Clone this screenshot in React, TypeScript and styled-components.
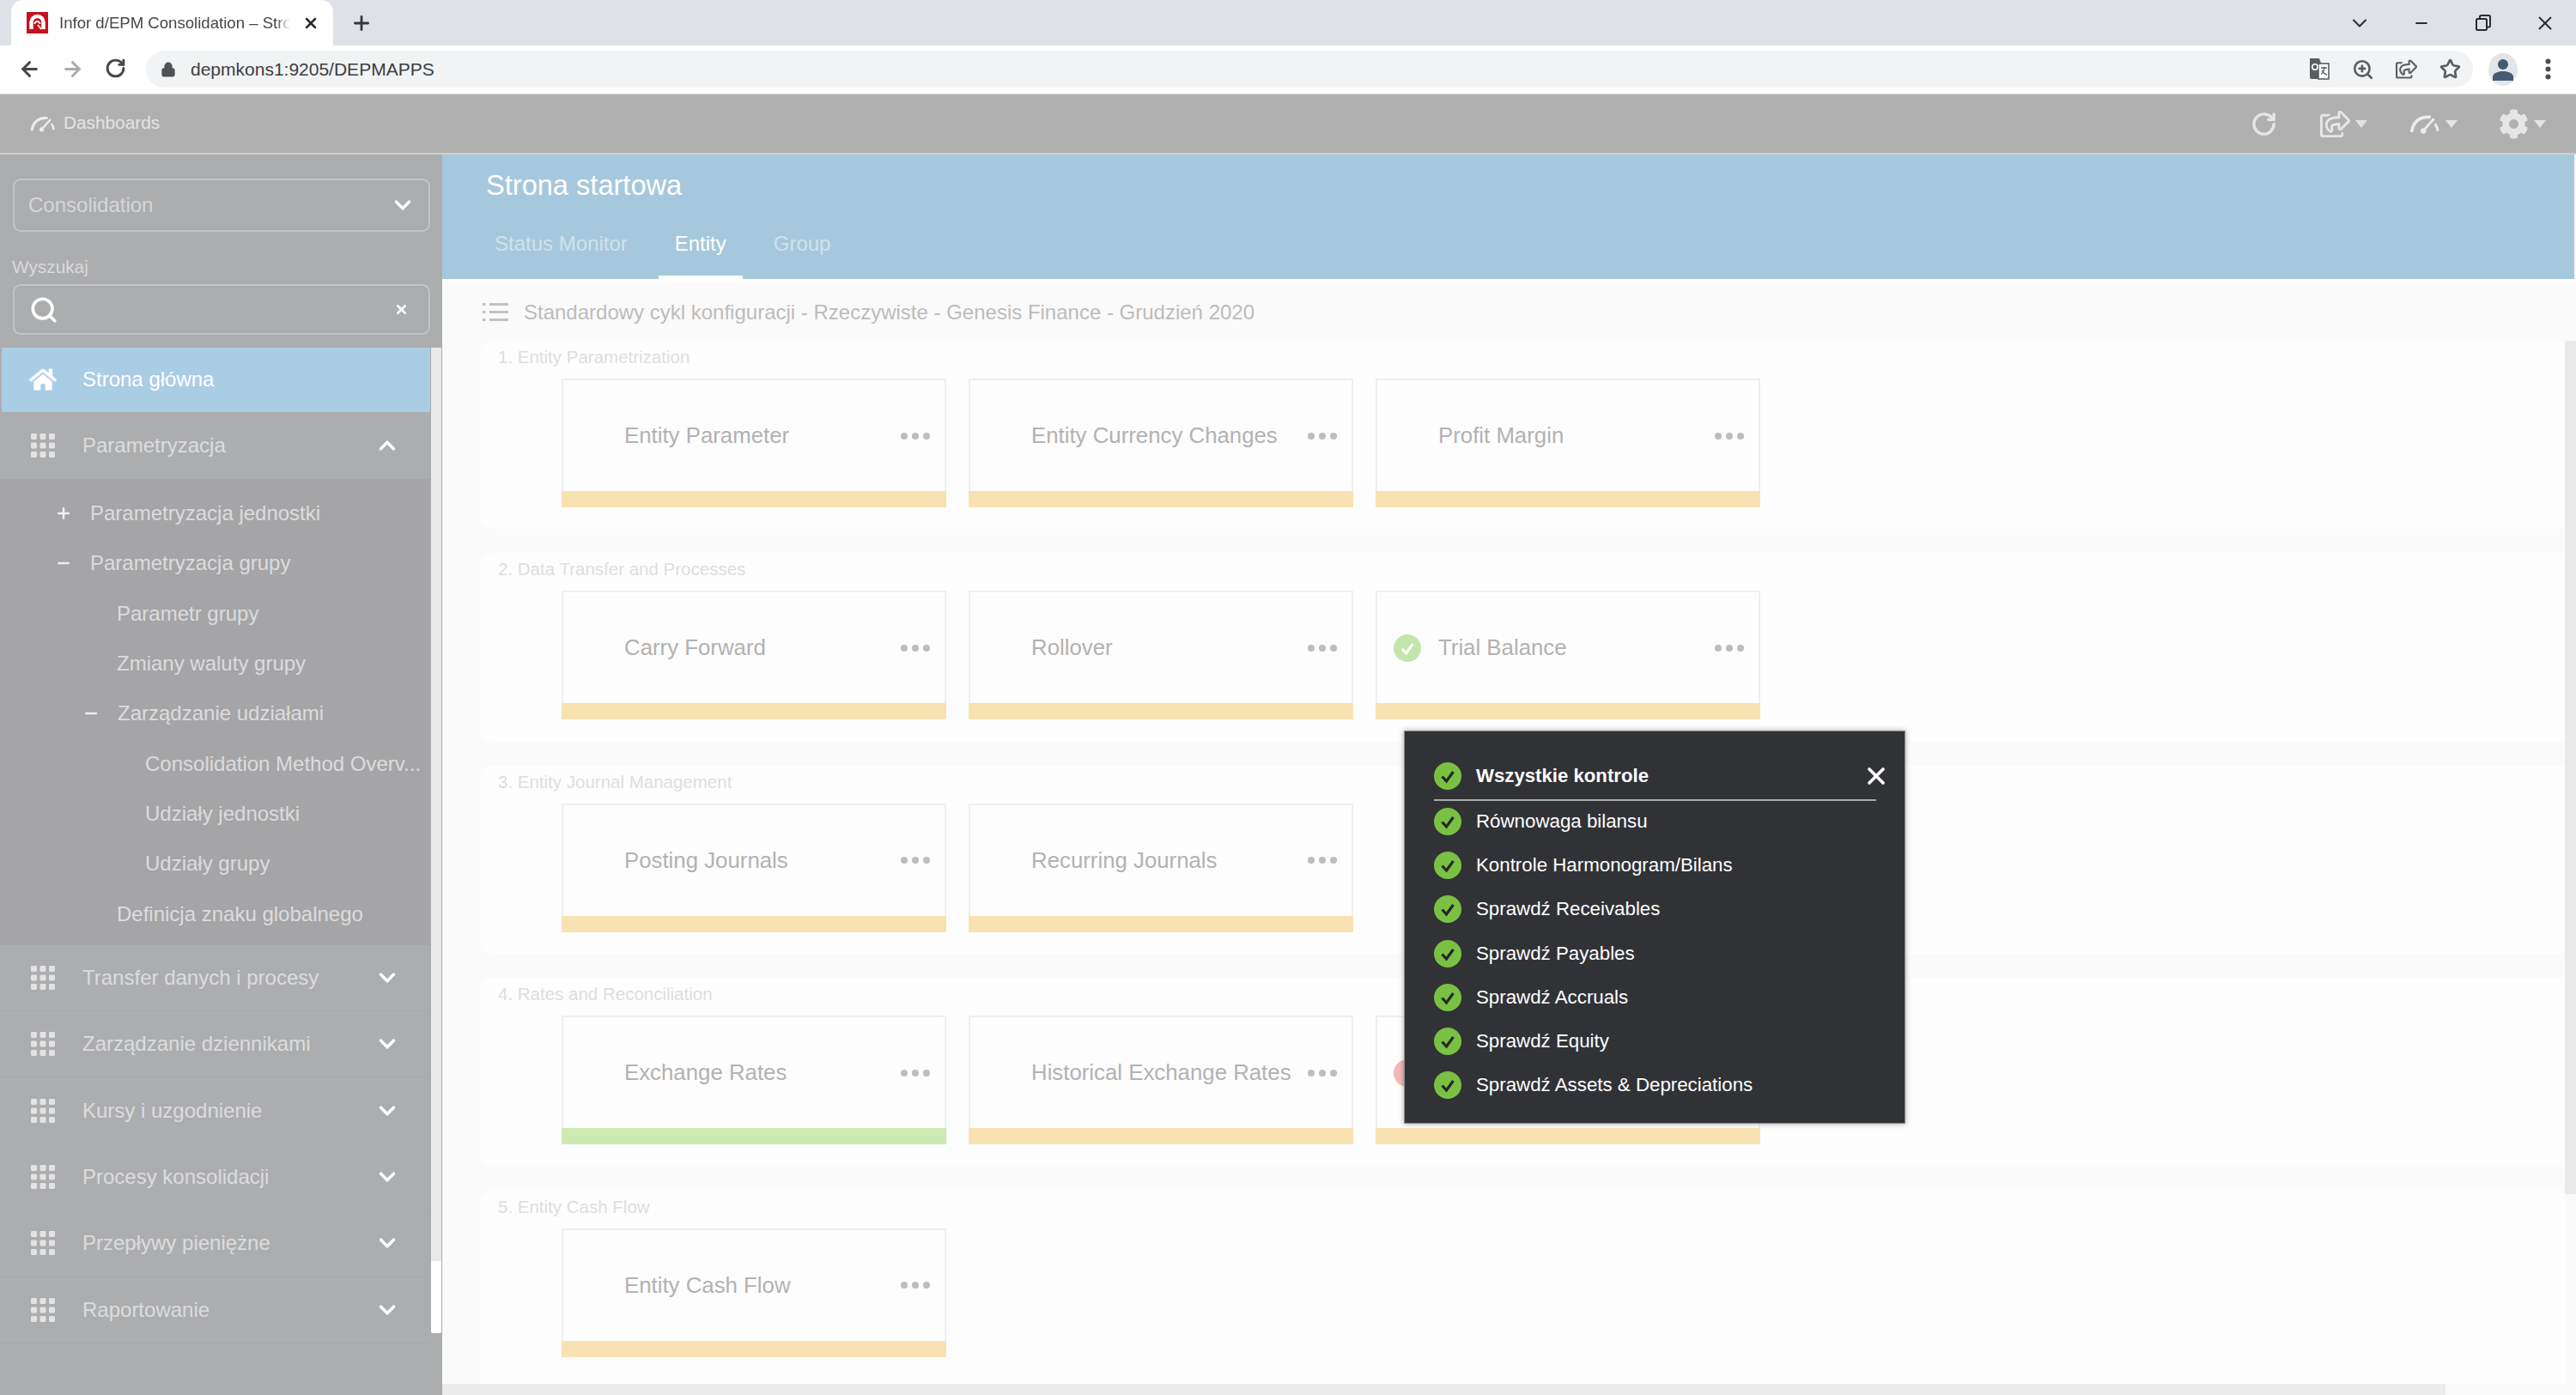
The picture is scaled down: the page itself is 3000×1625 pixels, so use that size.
import React from "react";
import styled, { createGlobalStyle } from "styled-components";
import { ArrowLeft, ArrowRight, RotateCw, Lock, Plus, X, Minus, Star, ZoomIn, Search, ChevronDown } from "lucide-react";
import { FaHome, FaCog, FaRegShareSquare, FaChevronDown, FaChevronUp } from "react-icons/fa";

const Global = createGlobalStyle`
  html, body { margin: 0; padding: 0; background: #fff; }
  #root { width: 3000px; height: 1625px; overflow: hidden; }
  * { box-sizing: border-box; }
  body { font-family: "Liberation Sans", Arial, sans-serif; }
`;

const Page = styled.div`
  position: relative;
  width: 3000px;
  height: 1625px;
  display: flex;
  flex-direction: column;
  overflow: hidden;
`;

/* ---------- browser chrome ---------- */
const TabStrip = styled.div`
  height: 53px;
  flex: none;
  background: #dee1e6;
  display: flex;
  align-items: stretch;
  padding-left: 13px;
`;
const BrowserTab = styled.div`
  width: 375px;
  background: #fff;
  border-radius: 14px 14px 0 0;
  display: flex;
  align-items: center;
  padding-left: 18px;
  color: #45474b;
  font-size: 18.6px;
`;
const TabTitle = styled.span`
  margin-left: 13px;
  width: 269px;
  white-space: nowrap;
  -webkit-mask-image: linear-gradient(90deg, #000 94%, transparent);
  mask-image: linear-gradient(90deg, #000 94%, transparent);
`;
const TabClose = styled.span`
  margin-left: 14px;
  display: flex;
  color: #2c2d30;
`;
const NewTab = styled.span`
  margin-left: 20px;
  display: flex;
  align-items: center;
  color: #36383b;
`;
const WindowButtons = styled.div`
  margin-left: auto;
  display: flex;
  align-items: center;
  color: #2b2c2f;
  padding-right: 0;
`;
const WindowButton = styled.span`
  width: 72px;
  height: 44px;
  display: flex;
  align-items: center;
  justify-content: center;
`;
const Toolbar = styled.div`
  height: 57px;
  flex: none;
  background: #fff;
  border-bottom: 1px solid #dcdcdc;
  display: flex;
  align-items: center;
  padding-bottom: 1px;
`;
const NavButton = styled.span<{ $dim?: boolean }>`
  width: 50px;
  display: flex;
  justify-content: center;
  color: ${(p) => (p.$dim ? "#a9abae" : "#45474b")};
`;
const NavButtons = styled.div`
  display: flex;
  padding-left: 9px;
  width: 170px;
`;
const Omnibox = styled.div`
  width: 2710px;
  height: 43px;
  border-radius: 22px;
  background: #f1f3f4;
  display: flex;
  align-items: center;
  padding-left: 17px;
  padding-right: 11px;
  color: #505256;
`;
const Url = styled.span`
  margin-left: 17px;
  color: #3c3e42;
  font-size: 21px;
`;
const OmniIcons = styled.div`
  margin-left: auto;
  display: flex;
  align-items: center;
  gap: 20px;
  color: #5b5d61;
`;
const OmniIcon = styled.span`
  width: 31px;
  display: flex;
  justify-content: center;
`;
const Avatar = styled.span`
  margin-left: 18px;
  width: 34px;
  height: 38px;
  border-radius: 50%;
  background: #e3e5e9;
  display: flex;
  align-items: center;
  justify-content: center;
`;
const Kebab = styled.span`
  margin-left: 32px;
  display: flex;
`;

/* ---------- app header ---------- */
const AppHeader = styled.header`
  height: 70px;
  flex: none;
  background: #b0b0b1;
  border-bottom: 2px solid #cfcfd0;
  display: flex;
  align-items: center;
  padding-left: 35px;
  color: #e6e6e6;
`;
const DashLabel = styled.span`
  margin-left: 9px;
  margin-bottom: 3px;
  font-size: 20.8px;
  color: #e4e4e4;
`;
const HeaderTools = styled.div`
  margin-left: auto;
  display: flex;
  align-items: center;
  padding-right: 35px;
`;
const HeaderTool = styled.span<{ $w: number }>`
  width: ${(p) => p.$w}px;
  display: flex;
  align-items: center;
  gap: 6px;
`;
const Caret = styled.span`
  width: 0;
  height: 0;
  border-left: 7px solid transparent;
  border-right: 7px solid transparent;
  border-top: 9px solid #e3e3e3;
`;

/* ---------- layout ---------- */
const Body = styled.div`
  flex: 1;
  min-height: 0;
  display: flex;
`;

/* ---------- sidebar ---------- */
const Sidebar = styled.aside`
  width: 515px;
  flex: none;
  background: #acadaf;
  display: flex;
  flex-direction: column;
  padding-top: 28px;
`;
const SideFields = styled.div`
  padding: 0 14px 0 15px;
  height: 197px;
  flex: none;
`;
const FieldBox = styled.div<{ $h: number }>`
  height: ${(p) => p.$h}px;
  border: 2px solid #c4c4c6;
  border-radius: 9px;
  display: flex;
  align-items: center;
  color: #fff;
`;
const SelectBox = styled(FieldBox)`
  padding: 0 19px 0 16px;
  justify-content: space-between;
`;
const SelectText = styled.span`
  color: #d6d6d7;
  font-size: 24px;
`;
const FieldLabel = styled.div`
  font-size: 20.8px;
  color: #d9d9da;
  margin: 30px 0 9px -1px;
  height: 22px;
  line-height: 22px;
`;
const SearchBox = styled(FieldBox)`
  padding: 0 23px 0 17px;
  justify-content: space-between;
`;
const NavArea = styled.div`
  flex: 1;
  display: flex;
  min-height: 0;
`;
const NavList = styled.nav`
  width: 501px;
  flex: none;
`;
const ActiveRow = styled.div`
  height: 75px;
  margin-left: 2px;
  padding-bottom: 2px;
  background: #aacde6;
  display: flex;
  align-items: center;
  color: #fff;
  font-size: 24px;
`;
const GroupRow = styled.div<{ $open?: boolean }>`
  height: ${(p) => (p.$open ? 78 : 77.4)}px;
  display: flex;
  align-items: center;
  color: #dcdcdd;
  font-size: 24px;
  border-bottom: 1px solid ${(p) => (p.$open ? "transparent" : "#a7a8aa")};
`;
const IconSlot = styled.span`
  width: 96px;
  flex: none;
  display: flex;
  justify-content: center;
  padding-left: 4px;
`;
const ActiveIconSlot = styled(IconSlot)`
  margin-left: -2px;
`;
const RowLabel = styled.span`
  flex: 1;
`;
const RowChevron = styled.span`
  width: 100px;
  flex: none;
  display: flex;
  justify-content: center;
  color: #fff;
`;
const SubList = styled.div`
  background: #a5a5a7;
  padding: 11px 0 7px;
`;
const SubRow = styled.div<{ $level: number }>`
  height: 58.3px;
  display: flex;
  align-items: center;
  padding-left: ${(p) => p.$level}px;
  color: #dcdcdd;
  font-size: 24px;
  white-space: nowrap;
`;
const TreeIcon = styled.span`
  width: 41px;
  display: flex;
  justify-content: flex-start;
  color: #eee;
`;
const SideScroll = styled.div`
  width: 12px;
  margin-left: 1px;
  flex: none;
  display: flex;
  flex-direction: column;
`;
const SideTrack = styled.div`
  height: 1064px;
  background: #e9e9e9;
`;
const SideThumb = styled.div`
  height: 84px;
  background: #fff;
  border-radius: 0 0 2px 2px;
`;

/* ---------- main ---------- */
const Main = styled.main`
  flex: 1;
  min-width: 0;
  display: flex;
  flex-direction: column;
  background: #fafafa;
`;
const BlueHead = styled.div`
  height: 145px;
  flex: none;
  margin-right: 2px;
  background: #a6c8dc;
  padding-left: 42px;
  position: relative;
  display: flex;
  flex-direction: column;
`;
const WhiteStripe = styled.div`
  height: 5px;
  background: #fff;
  flex: none;
`;
const PageTitle = styled.h1`
  margin: 17px 0 0 9px;
  height: 38px;
  line-height: 38px;
  font-weight: 400;
  font-size: 32.6px;
  color: #fff;
`;
const Tabs = styled.div`
  margin-top: 33px;
  flex: 1;
  display: flex;
  gap: 17px;
`;
const TabItem = styled.div<{ $active?: boolean }>`
  padding: 0 19px;
  height: 100%;
  font-size: 24px;
  line-height: 26px;
  padding-top: 3px;
  color: ${(p) => (p.$active ? "#fff" : "#d2e1ea")};
  border-bottom: ${(p) => (p.$active ? "4px solid #fff" : "4px solid transparent")};
  margin-bottom: 2px;
`;
const Crumb = styled.div`
  height: 67px;
  flex: none;
  display: flex;
  align-items: center;
  padding-left: 47px;
  font-size: 24px;
  color: #bcbcbc;
`;
const CrumbText = styled.span`
  margin-left: 18px;
`;
const ScrollArea = styled.div`
  flex: 1;
  min-height: 0;
  display: flex;
`;
const Panels = styled.div`
  flex: 1;
  padding-left: 44px;
  display: flex;
  flex-direction: column;
  gap: 28px;
`;
const Panel = styled.section`
  height: 219.4px;
  flex: none;
  background: #fdfdfd;
  border-radius: 14px 0 0 14px;
  padding-left: 21px;
  &:last-child {
    height: 226px;
    border-radius: 14px 0 0 0;
  }
`;
const PanelTitle = styled.div`
  height: 44px;
  line-height: 37px;
  font-size: 20.5px;
  color: #dedede;
`;
const CardRow = styled.div`
  display: flex;
  gap: 26px;
  padding-left: 74px;
`;
const Card = styled.div`
  width: 448px;
  height: 150px;
  background: #fdfdfd;
  border: 2px solid #efefef;
  border-bottom: 0;
  display: flex;
  flex-direction: column;
`;
const CardBody = styled.div`
  flex: 1;
  display: flex;
  align-items: center;
`;
const CardStatus = styled.span`
  width: 71px;
  flex: none;
  display: flex;
  justify-content: center;
  padding-right: 2px;
`;
const CardName = styled.span`
  flex: 1;
  font-size: 25.8px;
  color: #b2b2b2;
  white-space: nowrap;
`;
const Dots = styled.span`
  margin-right: 17px;
  display: flex;
  gap: 5px;
`;
const Dot = styled.i`
  width: 8px;
  height: 8px;
  border-radius: 50%;
  background: #bdbdbd;
`;
const CardBar = styled.div<{ $tone: "amber" | "green" }>`
  height: 19px;
  margin: 0 -2px;
  flex: none;
  background: ${(p) => (p.$tone === "green" ? "#cdeab3" : "#f9e2b1")};
`;
const VTrack = styled.div`
  width: 13px;
  height: 994px;
  flex: none;
  background: #e9e9e9;
`;
const HTrack = styled.div`
  height: 13px;
  width: 2333px;
  flex: none;
  background: #ececec;
`;

/* ---------- popup ---------- */
const Popup = styled.div`
  position: absolute;
  left: 1635px;
  top: 851px;
  width: 584px;
  height: 458px;
  background: #313236;
  border: 1px solid #8e8e90;
  box-shadow: 0 0 6px rgba(0, 0, 0, 0.35);
  padding: 0 34px;
  color: #fff;
`;
const PopHead = styled.div`
  height: 81px;
  margin-right: -1px;
  margin-bottom: -2px;
  border-bottom: 2px solid #a9aaab;
  display: flex;
  align-items: center;
  font-size: 22.2px;
  font-weight: 700;
  padding-top: 24px;
  position: relative;
`;
const PopClose = styled.span`
  position: absolute;
  right: -16px;
  top: 36px;
  display: flex;
`;
const PopRow = styled.div`
  height: 51.3px;
  display: flex;
  align-items: center;
  font-size: 22.3px;
`;
const PopLabel = styled.span`
  margin-left: 17px;
`;

/* ---------- drawings ---------- */
const Check = ({ size = 32, bg = "#7ac143", fg = "#24282a" }: { size?: number; bg?: string; fg?: string }) => (
  <svg width={size} height={size} viewBox="0 0 32 32" style={{ flex: "none" }}>
    <circle cx="16" cy="16" r="16" fill={bg} />
    <path d="M9.5 16.5l5 5.5 8-11" fill="none" stroke={fg} strokeWidth="3.2" />
  </svg>
);

const Grid = () => (
  <svg width="28" height="28" viewBox="0 0 28 28" fill="#e3e3e4">
    {[0, 10.5, 21].map((y) =>
      [0, 10.5, 21].map((x) => <rect key={`${x}-${y}`} x={x} y={y} width="7" height="7" rx="1.4" />)
    )}
  </svg>
);

const Gauge = ({ color = "#ececec", w = 30 }: { color?: string; w?: number }) => (
  <svg width={w} height={w * 0.72} viewBox="0 0 40 29" fill="none" stroke={color} strokeLinecap="round">
    <path d="M3 24C5 12 14 5 26 6" strokeWidth="4.2" />
    <path d="M18 24L31 9" strokeWidth="3.2" />
    <circle cx="18" cy="24" r="3.6" fill={color} stroke="none" />
    <path d="M34 16c1.4 2 2.2 4 2.6 7" strokeWidth="3.4" />
  </svg>
);

const Favicon = () => (
  <svg width="25" height="25" viewBox="0 0 25 25">
    <rect width="25" height="25" fill="#c8101e" />
    <path d="M5.5 20V12a7 7 0 0 1 14 0v8" fill="none" stroke="#fff" strokeWidth="4.4" />
    <path d="M9.5 14a3 3 0 0 1 6 0M13 15l4 5" fill="none" stroke="#fff" strokeWidth="1.8" />
  </svg>
);

const Restore = () => (
  <svg width="18" height="19" viewBox="0 0 18 19" fill="none" stroke="#2b2c2f" strokeWidth="2">
    <rect x="1" y="5" width="12" height="13" rx="1.5" />
    <path d="M5 5V2.5C5 1.6 5.6 1 6.5 1h9c.9 0 1.5.6 1.5 1.5V13c0 .9-.6 1.5-1.5 1.5H13" />
  </svg>
);

const Translate = () => (
  <svg width="24" height="25" viewBox="0 0 24 25">
    <path d="M1 0h11l9 24H3a2 2 0 0 1-2-2z" fill="#5b5d61" />
    <rect x="11" y="6" width="12" height="18" fill="#fff" stroke="#5b5d61" strokeWidth="1.6" />
    <circle cx="7" cy="10" r="3.2" fill="none" stroke="#fff" strokeWidth="1.6" />
    <path d="M14 11h7M17.5 10v2c0 3-1.5 5-3.5 6.5M15 14c1 2 3 4 6 5" fill="none" stroke="#5b5d61" strokeWidth="1.4" />
  </svg>
);

const Person = () => (
  <svg width="24" height="26" viewBox="0 0 24 26" fill="#475a73">
    <circle cx="12" cy="7" r="6" />
    <path d="M0 26v-4c0-5 6-7 12-7s12 2 12 7v4z" />
  </svg>
);

const KebabDots = () => (
  <svg width="7" height="25" viewBox="0 0 7 25" fill="#4b4d50">
    <circle cx="3.5" cy="3.5" r="3" />
    <circle cx="3.5" cy="12.5" r="3" />
    <circle cx="3.5" cy="21.5" r="3" />
  </svg>
);

const ListGlyph = () => (
  <svg width="30" height="23" viewBox="0 0 30 23" fill="#c2c2c2">
    {[1, 10, 19].map((y) => (
      <g key={y}>
        <rect x="0" y={y} width="3.5" height="3" />
        <rect x="8" y={y} width="22" height="3" />
      </g>
    ))}
  </svg>
);

const ThreeDots = () => (
  <Dots>
    <Dot />
    <Dot />
    <Dot />
  </Dots>
);

/* ---------- data ---------- */
type Item = { name?: string; tone: "amber" | "green"; status?: "ok" | "bad" };
const sections: { title: string; cards: Item[] }[] = [
  {
    title: "1. Entity Parametrization",
    cards: [
      { name: "Entity Parameter", tone: "amber" },
      { name: "Entity Currency Changes", tone: "amber" },
      { name: "Profit Margin", tone: "amber" },
    ],
  },
  {
    title: "2. Data Transfer and Processes",
    cards: [
      { name: "Carry Forward", tone: "amber" },
      { name: "Rollover", tone: "amber" },
      { name: "Trial Balance", tone: "amber", status: "ok" },
    ],
  },
  {
    title: "3. Entity Journal Management",
    cards: [
      { name: "Posting Journals", tone: "amber" },
      { name: "Recurring Journals", tone: "amber" },
    ],
  },
  {
    title: "4. Rates and Reconciliation",
    cards: [
      { name: "Exchange Rates", tone: "green" },
      { name: "Historical Exchange Rates", tone: "amber" },
      { tone: "amber", status: "bad" },
    ],
  },
  { title: "5. Entity Cash Flow", cards: [{ name: "Entity Cash Flow", tone: "amber" }] },
];

const tree: { label: string; level: number; mark?: "plus" | "minus" }[] = [
  { label: "Parametryzacja jednostki", level: 64, mark: "plus" },
  { label: "Parametryzacja grupy", level: 64, mark: "minus" },
  { label: "Parametr grupy", level: 136 },
  { label: "Zmiany waluty grupy", level: 136 },
  { label: "Zarządzanie udziałami", level: 96, mark: "minus" },
  { label: "Consolidation Method Overv...", level: 169 },
  { label: "Udziały jednostki", level: 169 },
  { label: "Udziały grupy", level: 169 },
  { label: "Definicja znaku globalnego", level: 136 },
];

const groups = [
  "Transfer danych i procesy",
  "Zarządzanie dziennikami",
  "Kursy i uzgodnienie",
  "Procesy konsolidacji",
  "Przepływy pieniężne",
  "Raportowanie",
];

const checks = [
  "Równowaga bilansu",
  "Kontrole Harmonogram/Bilans",
  "Sprawdź Receivables",
  "Sprawdź Payables",
  "Sprawdź Accruals",
  "Sprawdź Equity",
  "Sprawdź Assets & Depreciations",
];

export default function App() {
  return (
    <Page>
      <Global />
      <TabStrip>
        <BrowserTab>
          <Favicon />
          <TabTitle>Infor d/EPM Consolidation – Stro</TabTitle>
          <TabClose>
            <X size={20} strokeWidth={3} />
          </TabClose>
        </BrowserTab>
        <NewTab>
          <Plus size={26} strokeWidth={2.6} />
        </NewTab>
        <WindowButtons>
          <WindowButton>
            <ChevronDown size={28} strokeWidth={1.8} />
          </WindowButton>
          <WindowButton>
            <Minus size={20} strokeWidth={2.6} />
          </WindowButton>
          <WindowButton>
            <Restore />
          </WindowButton>
          <WindowButton>
            <X size={26} strokeWidth={1.8} />
          </WindowButton>
        </WindowButtons>
      </TabStrip>
      <Toolbar>
        <NavButtons>
          <NavButton>
            <ArrowLeft size={27} strokeWidth={2.6} />
          </NavButton>
          <NavButton $dim>
            <ArrowRight size={27} strokeWidth={2.6} />
          </NavButton>
          <NavButton>
            <RotateCw size={25} strokeWidth={2.8} />
          </NavButton>
        </NavButtons>
        <Omnibox>
          <Lock size={18} fill="#505256" strokeWidth={2.4} />
          <Url>depmkons1:9205/DEPMAPPS</Url>
          <OmniIcons>
            <OmniIcon>
              <Translate />
            </OmniIcon>
            <OmniIcon>
              <ZoomIn size={26} strokeWidth={2.4} />
            </OmniIcon>
            <OmniIcon>
              <FaRegShareSquare size={25} />
            </OmniIcon>
            <OmniIcon>
              <Star size={25} strokeWidth={2.6} />
            </OmniIcon>
          </OmniIcons>
        </Omnibox>
        <Avatar>
          <Person />
        </Avatar>
        <Kebab>
          <KebabDots />
        </Kebab>
      </Toolbar>
      <AppHeader>
        <Gauge />
        <DashLabel>Dashboards</DashLabel>
        <HeaderTools>
          <HeaderTool $w={81}>
            <RotateCw size={31} strokeWidth={2.6} />
          </HeaderTool>
          <HeaderTool $w={104}>
            <FaRegShareSquare size={35} />
            <Caret />
          </HeaderTool>
          <HeaderTool $w={104}>
            <Gauge w={36} />
            <Caret />
          </HeaderTool>
          <HeaderTool $w={55}>
            <FaCog size={35} />
            <Caret />
          </HeaderTool>
        </HeaderTools>
      </AppHeader>
      <Body>
        <Sidebar>
          <SideFields>
            <SelectBox $h={62}>
              <SelectText>Consolidation</SelectText>
              <FaChevronDown size={22} />
            </SelectBox>
            <FieldLabel>Wyszukaj</FieldLabel>
            <SearchBox $h={59}>
              <Search size={34} strokeWidth={2.6} />
              <X size={17} strokeWidth={3.6} />
            </SearchBox>
          </SideFields>
          <NavArea>
            <NavList>
              <ActiveRow>
                <ActiveIconSlot>
                  <FaHome size={32} />
                </ActiveIconSlot>
                <RowLabel>Strona główna</RowLabel>
              </ActiveRow>
              <GroupRow $open>
                <IconSlot>
                  <Grid />
                </IconSlot>
                <RowLabel>Parametryzacja</RowLabel>
                <RowChevron>
                  <FaChevronUp size={22} />
                </RowChevron>
              </GroupRow>
              <SubList>
                {tree.map((t) => (
                  <SubRow key={t.label} $level={t.level}>
                    {t.mark && (
                      <TreeIcon>
                        {t.mark === "plus" ? (
                          <Plus size={20} strokeWidth={3} />
                        ) : (
                          <Minus size={20} strokeWidth={3} />
                        )}
                      </TreeIcon>
                    )}
                    {t.label}
                  </SubRow>
                ))}
              </SubList>
              {groups.map((g) => (
                <GroupRow key={g}>
                  <IconSlot>
                    <Grid />
                  </IconSlot>
                  <RowLabel>{g}</RowLabel>
                  <RowChevron>
                    <FaChevronDown size={22} />
                  </RowChevron>
                </GroupRow>
              ))}
            </NavList>
            <SideScroll>
              <SideTrack />
              <SideThumb />
            </SideScroll>
          </NavArea>
        </Sidebar>
        <Main>
          <BlueHead>
            <PageTitle>Strona startowa</PageTitle>
            <Tabs>
              <TabItem>Status Monitor</TabItem>
              <TabItem $active>Entity</TabItem>
              <TabItem>Group</TabItem>
            </Tabs>
          </BlueHead>
          <WhiteStripe />
          <Crumb>
            <ListGlyph />
            <CrumbText>Standardowy cykl konfiguracji - Rzeczywiste - Genesis Finance - Grudzień 2020</CrumbText>
          </Crumb>
          <ScrollArea>
            <Panels>
              {sections.map((s) => (
                <Panel key={s.title}>
                  <PanelTitle>{s.title}</PanelTitle>
                  <CardRow>
                    {s.cards.map((c, i) => (
                      <Card key={i}>
                        <CardBody>
                          <CardStatus>
                            {c.status === "ok" && <Check bg="#c3e5ac" fg="#fdfdfd" />}
                            {c.status === "bad" && <Check bg="#f4b8b8" fg="#f4b8b8" />}
                          </CardStatus>
                          <CardName>{c.name}</CardName>
                          {c.name && <ThreeDots />}
                        </CardBody>
                        <CardBar $tone={c.tone} />
                      </Card>
                    ))}
                  </CardRow>
                </Panel>
              ))}
            </Panels>
            <VTrack />
          </ScrollArea>
          <HTrack />
        </Main>
      </Body>
      <Popup>
        <PopHead>
          <Check />
          <PopLabel>Wszystkie kontrole</PopLabel>
          <PopClose>
            <X size={32} strokeWidth={2.8} />
          </PopClose>
        </PopHead>
        {checks.map((c) => (
          <PopRow key={c}>
            <Check />
            <PopLabel>{c}</PopLabel>
          </PopRow>
        ))}
      </Popup>
    </Page>
  );
}
